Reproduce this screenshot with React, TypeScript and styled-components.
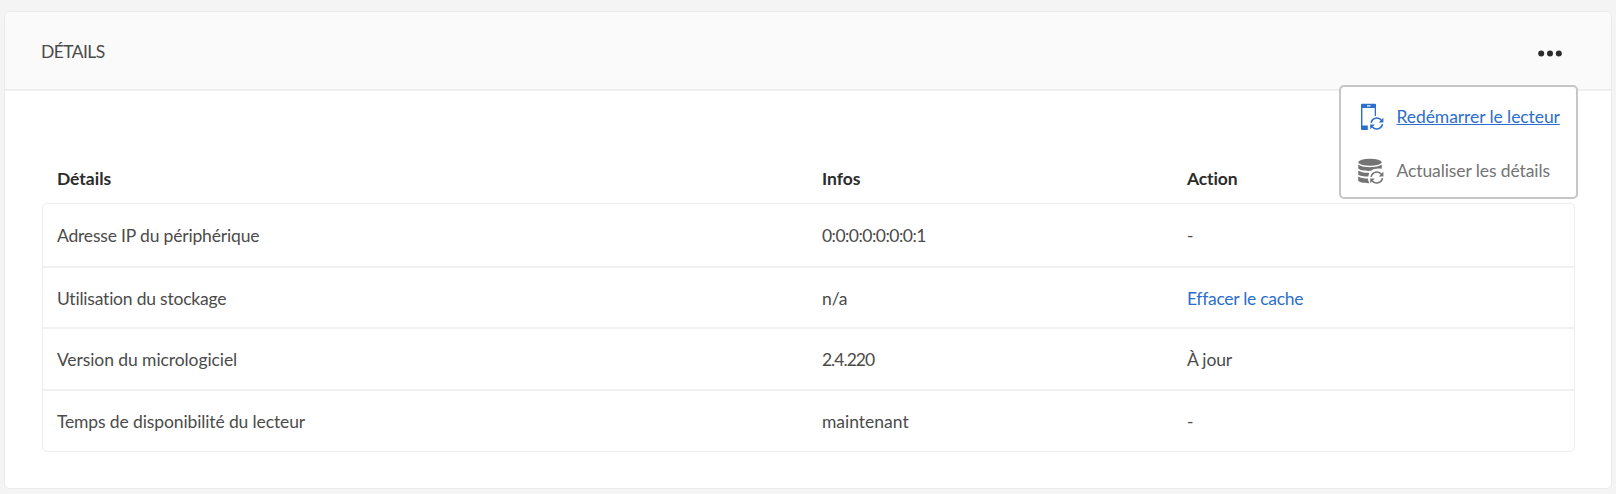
import React from "react";
import styled, { createGlobalStyle } from "styled-components";

const GlobalStyle = createGlobalStyle`
  * { box-sizing: border-box; }
  body {
    margin: 0;
    background: #f4f4f4;
    color: #4b4b4b;
    font-family: Lato, "Liberation Sans", sans-serif;
    font-size: 17.5px;
    line-height: 24px;
    font-variant-ligatures: none;
  }
`;

const Page = styled.main`
  height: 494px;
  padding: 11px 4px 0 4px;
`;

const Card = styled.section`
  height: 478px;
  background: #fff;
  border: 1px solid #ebebeb;
  border-radius: 6px;
`;

const CardHeader = styled.header`
  position: relative;
  display: flex;
  align-items: center;
  justify-content: space-between;
  height: 79px;
  padding: 3px 49px 0 36px;
  background: #fafafa;
  border-bottom: 2px solid #efefef;
  border-radius: 5px 5px 0 0;
`;

const Title = styled.h2`
  margin: 0;
  font: inherit;
  letter-spacing: -0.6px;
`;

const MoreButton = styled.button`
  display: flex;
  padding: 3px 0 0;
  border: 0;
  background: none;
`;

const Menu = styled.nav`
  position: absolute;
  top: 73px;
  right: 33px;
  width: 239px;
  height: 114px;
  padding: 3px 0 0 17px;
  background: #fff;
  border: 2px solid #c6c6c6;
  border-radius: 5px;
  z-index: 1;
`;

const MenuItem = styled.a<{ $active?: boolean }>`
  display: flex;
  align-items: center;
  gap: 12.5px;
  height: 54px;
  color: ${(p) => (p.$active ? "#2c6ecb" : "#747474")};
`;

const Label = styled.span<{ $spacing?: number; $underline?: boolean }>`
  letter-spacing: ${(p) => p.$spacing ?? 0}px;
  white-space: nowrap;
  text-decoration: ${(p) => (p.$underline ? "underline" : "none")};
  text-decoration-skip-ink: none;
  text-decoration-thickness: 1px;
  text-underline-offset: 1px;
`;

const Table = styled.div`
  padding: 71px 36px 0 36.5px;
`;

const Row = styled.div`
  display: grid;
  grid-template-columns: 765px 365px 1fr;
  align-items: center;
  height: 61.7px;
  padding: 2.4px 0 0 14.4px;
  & + & { border-top: 2px solid #f1f1f1; }
`;

const HeadRow = styled(Row)`
  height: 41px;
  padding: 0 0 8px 15.4px;
  color: #2c2c2c;
  font-weight: 700;
`;

const Body = styled.div`
  border: 1.5px solid #ededed;
  border-radius: 5px;
`;

const Link = styled.a`
  color: #2c6ecb;
`;

const Sync = () => (
  <g fill="none" stroke="currentColor" strokeWidth="1.600">
    <path d="M13.200 19.800a5.700 5.700 0 0 1 10.200-2.500" />
    <path d="M24.400 21.200a5.700 5.700 0 0 1-10.200 2.500" />
    <path d="M25.400 14.800v4.600h-4.600z M12.200 26.200v-4.600h4.600z" fill="currentColor" stroke="none" />
  </g>
);

const PlayerIcon = () => (
  <svg width="26" height="28" viewBox="0 0 26 28">
    <path
      d="M4 .7h13a1 1 0 0 1 1 1V13h-1.300V5H4.400v17.500h5.400V27H4a1 1 0 0 1-1-1V1.700a1 1 0 0 1 1-1z"
      fill="currentColor"
    />
    <path d="M9 2.900h3.500" stroke="#fff" strokeWidth="1.200" />
    <Sync />
  </svg>
);

const DatabaseIcon = () => (
  <svg width="26" height="28" viewBox="0 0 26 28">
    <g fill="currentColor">
      <ellipse cx="12" cy="5.200" rx="11.800" ry="3.500" />
      <path d="M.2 7.600c3 3.400 20.300 3.400 23.600 0v4.200c-4-.9-8.500-.3-10.800 2C8 14.200 2 13.400.2 11.500z" />
      <path d="M.2 13.500c2.500 2 7 2.500 11 2.300l-1 3.800C6 19.500 1.500 18.900.2 17.500z" />
      <path d="M.2 19.500c2.300 1.600 6 2 9.500 2l1.500 4.700C6 26.300 1.500 25.500.2 23.800z" />
    </g>
    <Sync />
  </svg>
);

type Entry = { text: string; spacing: number };

const rows: { name: Entry; info: Entry; action: Entry; link?: boolean }[] = [
  {
    name: { text: "Adresse IP du périphérique", spacing: -0.17 },
    info: { text: "0:0:0:0:0:0:0:1", spacing: -0.52 },
    action: { text: "-", spacing: 0 },
  },
  {
    name: { text: "Utilisation du stockage", spacing: -0.21 },
    info: { text: "n/a", spacing: 0 },
    action: { text: "Effacer le cache", spacing: -0.28 },
    link: true,
  },
  {
    name: { text: "Version du micrologiciel", spacing: -0.08 },
    info: { text: "2.4.220", spacing: -0.95 },
    action: { text: "À jour", spacing: -0.15 },
  },
  {
    name: { text: "Temps de disponibilité du lecteur", spacing: -0.12 },
    info: { text: "maintenant", spacing: 0 },
    action: { text: "-", spacing: 0 },
  },
];

const Text = ({ text, spacing }: Entry) => <Label $spacing={spacing}>{text}</Label>;

export default function App() {
  return (
    <Page>
      <GlobalStyle />
      <Card>
        <CardHeader>
          <Title>DÉTAILS</Title>
          <MoreButton aria-label="Plus">
            <svg width="24" height="7" viewBox="0 0 24 7" fill="#2c2c2c">
              <circle cx="3.200" cy="3.500" r="3" />
              <circle cx="12" cy="3.500" r="3" />
              <circle cx="20.800" cy="3.500" r="3" />
            </svg>
          </MoreButton>
          <Menu>
            <MenuItem $active>
              <PlayerIcon />
              <Label $underline $spacing={-0.08}>Redémarrer le lecteur</Label>
            </MenuItem>
            <MenuItem>
              <DatabaseIcon />
              <Label $spacing={-0.1}>Actualiser les détails</Label>
            </MenuItem>
          </Menu>
        </CardHeader>
        <Table>
          <HeadRow>
            <Label>Détails</Label>
            <Label>Infos</Label>
            <Label $spacing={-0.1}>Action</Label>
          </HeadRow>
          <Body>
            {rows.map((r) => (
              <Row key={r.name.text}>
                <Text {...r.name} />
                <Text {...r.info} />
                {r.link ? <Link><Text {...r.action} /></Link> : <Text {...r.action} />}
              </Row>
            ))}
          </Body>
        </Table>
      </Card>
    </Page>
  );
}
